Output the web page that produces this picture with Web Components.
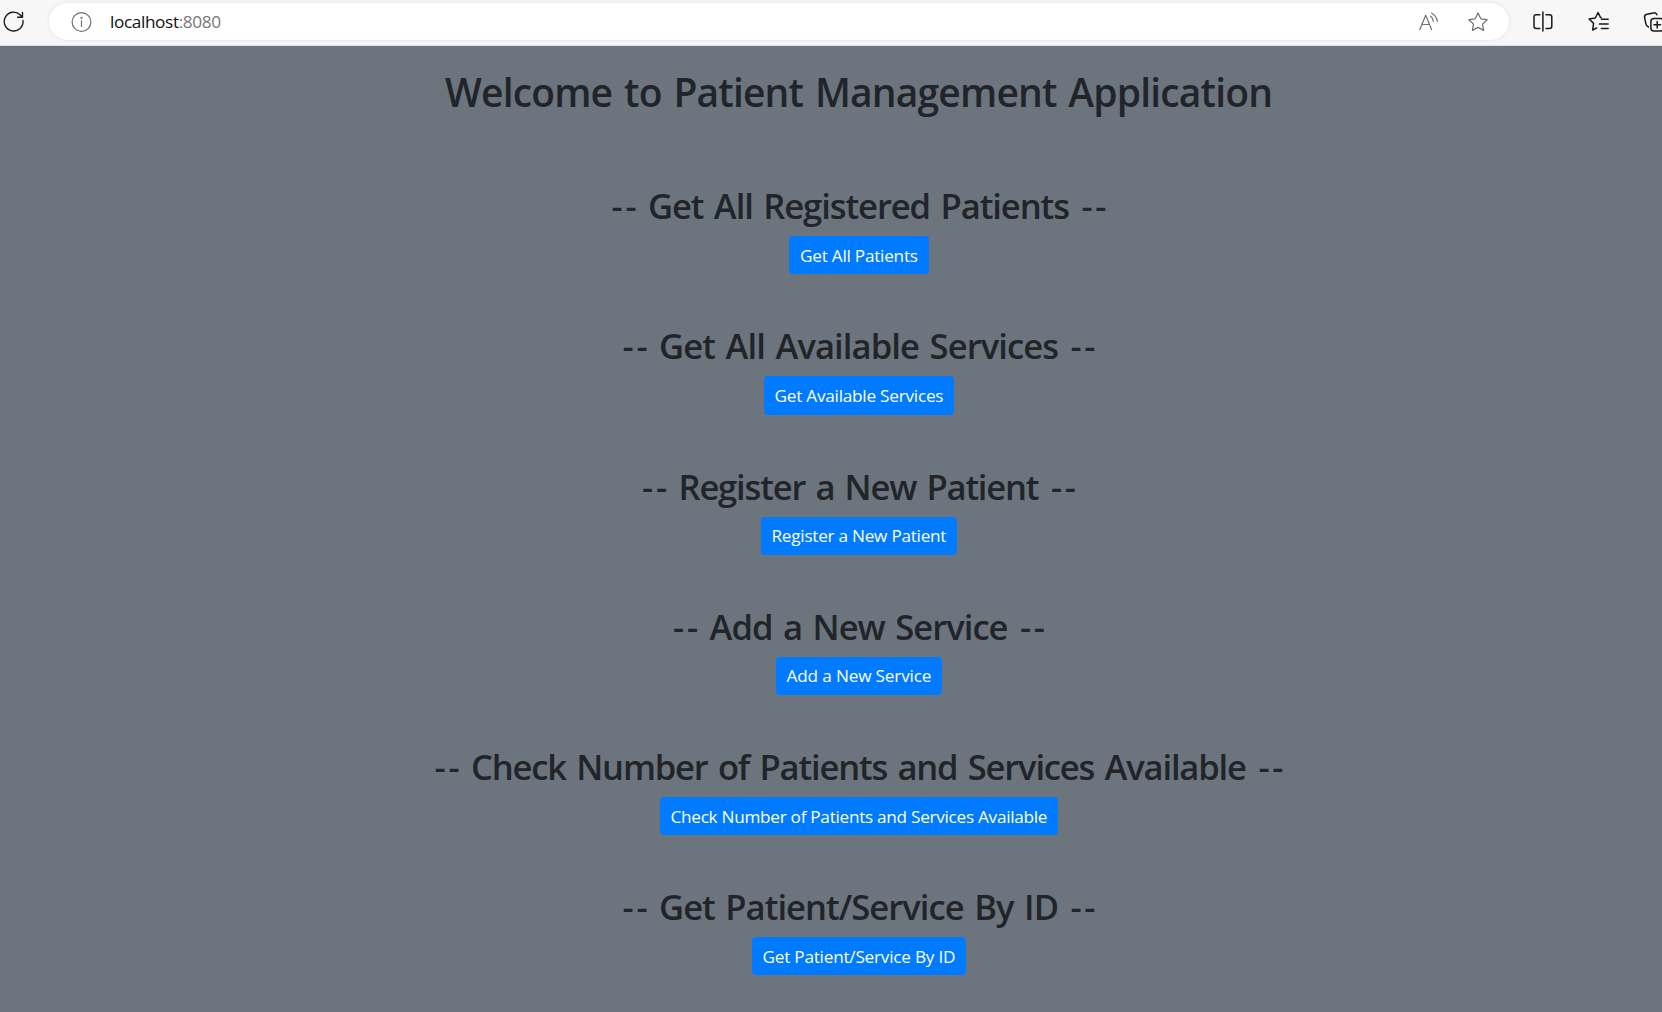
<!DOCTYPE html>
<html lang="en">
<head>
<meta charset="utf-8">
<title>Patient Management</title>
<style>
html,body{margin:0;height:100%;overflow:hidden;background:#6c757d}
body{font-family:"Open Sans","Noto Sans",sans-serif;color:#212529}
</style>
</head>
<body>
<app-window></app-window>
<script>
// Spreads letters so that a label occupies its design width.
function fitText(el, width){
  el.style.letterSpacing = '0px';
  const natural = el.getBoundingClientRect().width;
  const count = el.textContent.length;
  const ls = (width - natural) / (count - 1);
  el.style.letterSpacing = ls + 'px';
  el.style.marginRight = -ls + 'px';
}
class FitText extends HTMLElement{
  connectedCallback(){
    this.attachShadow({mode:'open'}).innerHTML = `<style>:host{display:inline-block;white-space:pre}</style><slot></slot>`;
    fitText(this, +this.getAttribute('width'));
  }
}
class BrowserBar extends HTMLElement{
  connectedCallback(){
    this.attachShadow({mode:'open'}).innerHTML = `<style>
:host{display:flex;align-items:flex-start;height:46px;box-sizing:border-box;background:#f7f7f7;border-bottom:1px solid #dfe0e1;width:1718px;color:#1b1b1b}
svg{display:block;flex:none;fill:none;stroke:currentColor;stroke-width:1.35;stroke-linecap:round;stroke-linejoin:round}
.reload{margin:10px 0 0 2px}
.pill{display:flex;align-items:center;box-sizing:border-box;width:1460px;height:37px;margin:3px 0 0 23px;padding:0 20px 0 22px;border-radius:19px;background:#fff;color:#707070;box-shadow:0 0 4px rgba(0,0,0,.09)}
.url{flex:1;margin-left:18px;font-size:17.2px;line-height:37px;color:#777}
.url b{font-weight:400;color:#111}
.pill svg{stroke-width:1.2}
.tools{display:flex;gap:32px;margin:10px 0 0 22px}
.read{margin-right:27px}
</style>
<svg class="reload" width="24" height="24"><path d="M21 10.5A9.4 9.4 0 1 1 18.3 4.9L20.4 7M20.5 2.4V7.2H15.6"/></svg>
<div class="pill">
<svg width="21" height="22"><circle cx="10.5" cy="11" r="9.4"/><path d="M10.5 9.8V15.5"/><circle cx="10.5" cy="6.8" r=".5" fill="currentColor"/></svg>
<span class="url"><fit-text width="111"><b>localhost</b>:8080</fit-text></span>
<svg class="read" width="24" height="22"><path d="M3.8 18.5 9.7 4.2 15.6 18.5M5.8 13.5H13.6M14.6 5.2Q17 7 17.3 10.3M15.5 2.1Q20.6 5 21.3 10.5"/></svg>
<svg width="22" height="22"><path d="m11 2 2.8 5.8 6.3.9-4.6 4.4 1.1 6.3L11 16.4l-5.6 3 1.1-6.3L1.9 8.7l6.3-.9Z"/></svg>
</div>
<div class="tools">
<svg style="margin-left:1px" width="22" height="24"><path stroke-width="1.5" d="M7.8 4.7H4.2Q2 4.7 2 6.9V16.3Q2 18.5 4.2 18.5H7.8M14 4.7H17.6Q19.8 4.7 19.8 6.9V16.3Q19.8 18.5 17.6 18.5H14M10.9 2V21"/></svg>
<svg style="margin-left:1px" width="24" height="24"><path stroke-width="1.5" d="M14.2 7.4 13.5 7.5 11.1 2.5 8.3 8 2.1 9 6.6 13.4 5.6 20 9.6 18M14.4 9.3H21.2M12.4 14H21.2M14.4 18.6H21.2"/></svg>
<svg width="28" height="24"><g stroke-width="1.5"><rect x="7.9" y="8.6" width="12.8" height="12.3" rx="3"/><path d="M14.2 11.5V18M11 14.8H17.5M5.4 17Q3.4 16.3 2.8 13.6L1.6 7.6Q1.2 4.8 3.9 4.3L10.6 2.9Q13 2.6 13.9 4.8"/></g></svg>
</div>`;
  }
}
class ActionButton extends HTMLElement{
  connectedCallback(){
    const w = this.getAttribute('width');
    this.attachShadow({mode:'open'}).innerHTML = `<style>
:host{display:block}
button{display:flex;align-items:center;justify-content:center;box-sizing:border-box;width:${w}px;height:38.2px;padding:1px 0 0;border:0;border-radius:4px;background:#007bff;color:#fff;font:400 17.2px/26px "Open Sans","Noto Sans",sans-serif;white-space:nowrap}
</style><button type="button"><fit-text width="${this.getAttribute('text-width')}">${this.textContent}</fit-text></button>`;
  }
}
class ActionSection extends HTMLElement{
  connectedCallback(){
    this.attachShadow({mode:'open'}).innerHTML = `<style>
:host{display:flex;flex-direction:column;align-items:center;height:140.2px}
h2{margin:0 0 8.8px;font-size:34.6px;line-height:42.2px;font-weight:600;white-space:nowrap;word-spacing:2.5px}
</style><h2><fit-text width="25">--</fit-text> <fit-text width="${this.getAttribute('width')}">${this.getAttribute('heading')}</fit-text> <fit-text width="25">--</fit-text></h2><slot></slot>`;
  }
}
class AppWindow extends HTMLElement{
  connectedCallback(){
    const rows = [
      ['Get All Registered Patients',422,'Get All Patients',140,118],
      ['Get All Available Services',400,'Get Available Services',190,169],
      ['Register a New Patient',361,'Register a New Patient',196,175],
      ['Add a New Service',299,'Add a New Service',166,145],
      ['Check Number of Patients and Services Available',776,'Check Number of Patients and Services Available',398,377],
      ['Get Patient/Service By ID',400,'Get Patient/Service By ID',214,193]
    ];
    this.attachShadow({mode:'open'}).innerHTML = `<style>
:host{display:block;height:1012px;overflow:hidden}
main{width:1718px;display:flex;flex-direction:column;align-items:center}
h1{margin:22px 0 69.2px;font-size:39px;line-height:48px;font-weight:600;white-space:nowrap;word-spacing:2.5px}
</style><browser-bar></browser-bar><main><h1><fit-text width="828">Welcome to Patient Management Application</fit-text></h1>
${rows.map(([h,w,b,bw,tw])=>`<action-section heading="${h}" width="${w}"><action-button width="${bw}" text-width="${tw}">${b}</action-button></action-section>`).join('')}</main>`;
  }
}
customElements.define('fit-text',FitText);
customElements.define('browser-bar',BrowserBar);
customElements.define('action-button',ActionButton);
customElements.define('action-section',ActionSection);
customElements.define('app-window',AppWindow);
</script>
</body>
</html>
